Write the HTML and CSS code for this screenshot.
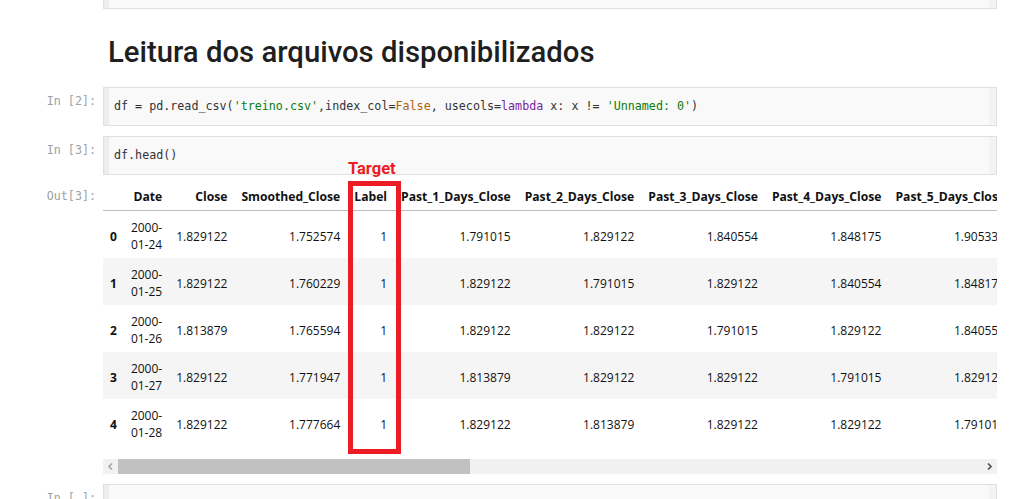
FILE: index.html
```html
<!DOCTYPE html>
<html lang="pt">
<head>
<meta charset="utf-8">
<title>Notebook</title>
<link rel="stylesheet" href="styles.css">
</head>
<body>
<div class="notebook">
  <div class="cell stub-cell">
    <div class="prompt"></div>
    <div class="input stub"><div class="gutter"></div><div class="code"></div><div class="vbar"></div></div>
  </div>

  <div class="cell md-cell">
    <div class="prompt"></div>
    <h1 class="heading">Leitura dos arquivos disponibilizados</h1>
  </div>

  <div class="cell code-cell">
    <div class="prompt">In&nbsp;[2]:</div>
    <div class="input"><div class="gutter"></div><div class="code">df = pd.read_csv(<span class="s">'treino.csv'</span>,index_col=<span class="a">False</span>, usecols=<span class="k">lambda</span> x: x != <span class="s">'Unnamed: 0'</span>)</div><div class="vbar"></div></div>
  </div>

  <div class="cell code-cell second">
    <div class="prompt">In&nbsp;[3]:</div>
    <div class="input"><div class="gutter"></div><div class="code">df.head()</div><div class="vbar"></div></div>
  </div>

  <div class="cell out-cell">
    <div class="prompt out-prompt">Out[3]:</div>
    <div class="output">
      <div class="table-wrap">
        <table class="df">
          <thead>
            <tr><th></th><th>Date</th><th>Close</th><th>Smoothed_Close</th><th>Label</th><th>Past_1_Days_Close</th><th>Past_2_Days_Close</th><th>Past_3_Days_Close</th><th>Past_4_Days_Close</th><th>Past_5_Days_Close</th><th>Past_6_Days_Close</th></tr>
          </thead>
          <tbody>
            <tr><th>0</th><td class="date">2000-01-24</td><td>1.829122</td><td>1.752574</td><td>1</td><td>1.791015</td><td>1.829122</td><td>1.840554</td><td>1.848175</td><td>1.905335</td><td>1.917386</td></tr>
            <tr><th>1</th><td class="date">2000-01-25</td><td>1.829122</td><td>1.760229</td><td>1</td><td>1.829122</td><td>1.791015</td><td>1.829122</td><td>1.840554</td><td>1.848175</td><td>1.905335</td></tr>
            <tr><th>2</th><td class="date">2000-01-26</td><td>1.813879</td><td>1.765594</td><td>1</td><td>1.829122</td><td>1.829122</td><td>1.791015</td><td>1.829122</td><td>1.840554</td><td>1.848175</td></tr>
            <tr><th>3</th><td class="date">2000-01-27</td><td>1.829122</td><td>1.771947</td><td>1</td><td>1.813879</td><td>1.829122</td><td>1.829122</td><td>1.791015</td><td>1.829122</td><td>1.840554</td></tr>
            <tr><th>4</th><td class="date">2000-01-28</td><td>1.829122</td><td>1.777664</td><td>1</td><td>1.829122</td><td>1.813879</td><td>1.829122</td><td>1.829122</td><td>1.791015</td><td>1.829122</td></tr>
          </tbody>
        </table>
      </div>
      <div class="hscroll">
        <span class="hs-btn"><svg width="15" height="15" viewBox="0 0 15 15"><path d="M9 4.5 L6 7.5 L9 10.5" fill="none" stroke="#a6a6a6" stroke-width="1.7"/></svg></span>
        <span class="hs-thumb"></span>
        <span class="hs-track"></span>
        <span class="hs-btn"><svg width="15" height="15" viewBox="0 0 15 15"><path d="M6 4.5 L9 7.5 L6 10.5" fill="none" stroke="#505050" stroke-width="1.7"/></svg></span>
      </div>
      <span class="target-label">Target</span>
      <div class="target-box"></div>
    </div>
  </div>

  <div class="cell code-cell last">
    <div class="prompt">In&nbsp;[&nbsp;]:</div>
    <div class="input"><div class="gutter"></div><div class="code"> </div><div class="vbar"></div></div>
  </div>
</div>
</body>
</html>
```

FILE: styles.css
```css
html, body {
  margin: 0;
  padding: 0;
  background: #ffffff;
  overflow: hidden;
}

body {
  font-family: "Open Sans", "Liberation Sans", sans-serif;
  color: #111;
}

.notebook {
  display: flex;
  flex-direction: column;
  padding-right: 18px;
}

.cell {
  display: flex;
  align-items: flex-start;
}

.prompt {
  width: 103px;
  flex: none;
  box-sizing: border-box;
  padding-right: 7px;
  text-align: right;
  font-family: "DejaVu Sans Mono", "Liberation Mono", monospace;
  font-size: 11.7px;
  line-height: 17px;
  color: #a0a0a0;
  white-space: pre;
}

.input {
  flex: 1;
  min-width: 0;
  display: flex;
  border: 1px solid #e0e0e0;
  background: #f9f9f9;
}

.gutter {
  width: 5px;
  flex: none;
  background: #ededed;
}

.vbar {
  width: 7px;
  flex: none;
  background: #f3f3f3;
}

.code {
  flex: 1;
  min-width: 0;
  padding: 10px 5px 10px 5px;
  font-family: "DejaVu Sans Mono", "Liberation Mono", monospace;
  font-size: 11.7px;
  line-height: 17px;
  color: #333;
  white-space: pre;
  overflow: hidden;
}

.code .s { color: #0a7d0a; }
.code .a { color: #b0610d; }
.code .k { color: #7b1fa2; }

.code-cell .prompt {
  padding-top: 6px;
}

/* top stub of the previous cell */
.stub-cell .input {
  border-top: none;
  height: 8px;
}
.stub-cell .code { padding: 0; }

/* markdown heading */
.heading {
  margin: 26px 0 18px 0;
  padding-left: 5px;
  font-family: Roboto, "Liberation Sans", sans-serif;
  font-weight: 500;
  font-size: 29.3px;
  line-height: 34px;
  color: #1f1f1f;
  white-space: nowrap;
}

.code-cell.second {
  margin-top: 10px;
}

/* output */
.out-prompt {
  padding-top: 13px;
}

.output {
  flex: 1;
  min-width: 0;
  position: relative;
  padding-top: 8px;
}

.table-wrap {
  overflow: hidden;
}

.df {
  width: 1px;
  border-collapse: collapse;
  border-spacing: 0;
  font-family: "Open Sans", "Liberation Sans", sans-serif;
  font-size: 12px;
  line-height: 17px;
  color: #111;
}

.df thead th {
  font-weight: 700;
  font-size: 12.15px;
  text-align: right;
  white-space: nowrap;
  padding: 5px 7px 5px 7px;
  border-bottom: 1px solid #bdbdbd;
  vertical-align: bottom;
}

.df tbody th,
.df tbody td {
  padding: 8px 7px 5px 7px;
  text-align: right;
  vertical-align: middle;
  white-space: nowrap;
}

.df tbody th {
  font-weight: 700;
}

.df tbody td.date {
  white-space: normal;
  text-align: left;
}

.df tbody tr:nth-child(even) {
  background: #f5f5f5;
}

/* fake horizontal scrollbar */
.hscroll {
  display: flex;
  height: 15px;
  margin-top: 13px;
  background: #f1f1f1;
}

.hs-btn {
  width: 15px;
  height: 15px;
  flex: none;
  display: block;
}

.hs-btn svg {
  display: block;
}

.hs-thumb {
  width: 352px;
  flex: none;
  background: #c1c1c1;
}

.hs-track {
  flex: 1;
}

/* annotation overlay */
.target-label {
  position: absolute;
  left: 245px;
  top: -16px;
  font-family: Roboto, "Liberation Sans", sans-serif;
  font-weight: 700;
  font-size: 16.5px;
  line-height: 20px;
  color: #ec1c24;
}

.target-box {
  position: absolute;
  left: 245px;
  top: 6px;
  width: 43px;
  height: 263px;
  border: 5px solid #ec1c24;
}

.code-cell.last {
  margin-top: 10px;
}

.code-cell.last .input {
  height: 40px;
}
```
